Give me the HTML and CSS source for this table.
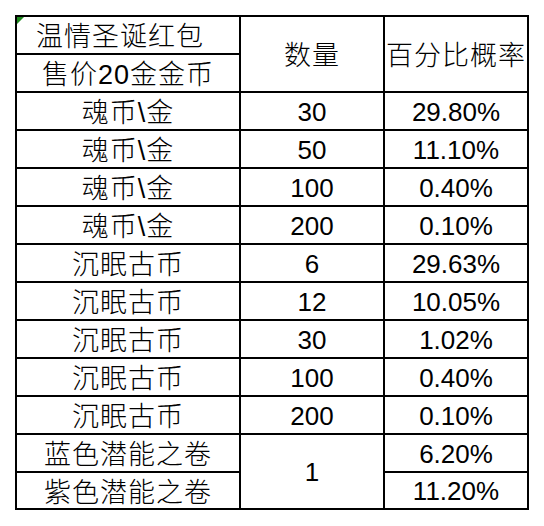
FILE: index.html
```html
<!DOCTYPE html>
<html lang="zh-CN">
<head>
<meta charset="utf-8">
<title>温情圣诞红包</title>
<link rel="stylesheet" href="styles.css">
</head>
<body>
<table class="rates">
  <colgroup>
    <col class="c-name">
    <col class="c-qty">
    <col class="c-pct">
  </colgroup>
  <tbody>
    <tr>
      <td class="title"><span class="flag"></span><span class="shift">温情圣诞红包</span></td>
      <td rowspan="2">数量</td>
      <td rowspan="2">百分比概率</td>
    </tr>
    <tr><td>售价20金金币</td></tr>
    <tr><td>魂币\金</td><td class="num">30</td><td class="num">29.80%</td></tr>
    <tr><td>魂币\金</td><td class="num">50</td><td class="num">11.10%</td></tr>
    <tr><td>魂币\金</td><td class="num">100</td><td class="num">0.40%</td></tr>
    <tr><td>魂币\金</td><td class="num">200</td><td class="num">0.10%</td></tr>
    <tr><td>沉眠古币</td><td class="num">6</td><td class="num">29.63%</td></tr>
    <tr><td>沉眠古币</td><td class="num">12</td><td class="num">10.05%</td></tr>
    <tr><td>沉眠古币</td><td class="num">30</td><td class="num">1.02%</td></tr>
    <tr><td>沉眠古币</td><td class="num">100</td><td class="num">0.40%</td></tr>
    <tr><td>沉眠古币</td><td class="num">200</td><td class="num">0.10%</td></tr>
    <tr><td>蓝色潜能之卷</td><td rowspan="2" class="num">1</td><td class="num">6.20%</td></tr>
    <tr class="last"><td>紫色潜能之卷</td><td class="num">11.20%</td></tr>
  </tbody>
</table>
</body>
</html>
```
FILE: styles.css
```css
html, body {
  margin: 0;
  padding: 0;
  background: #ffffff;
}

body {
  font-family: "Liberation Sans", "Noto Sans CJK SC", sans-serif;
  color: #000000;
}

.rates {
  margin: 15px 0 0 15px;
  border-collapse: collapse;
  table-layout: fixed;
  width: 514px;
}

.c-name { width: 224px; }
.c-qty { width: 144px; }
.c-pct { width: 144px; }

.rates tr { height: 38px; }
.rates tr.last { height: 37px; }

.rates td {
  border: 2px solid #000000;
  padding: 4px 0 0 0;
  text-align: center;
  vertical-align: middle;
  font-size: 27px;
  font-weight: 300;
  letter-spacing: 1px;
  line-height: 30px;
  white-space: nowrap;
  overflow: visible;
}

.rates td.num {
  font-size: 26px;
  font-weight: 400;
  letter-spacing: 0;
  padding-top: 1px;
}

.rates td.title {
  position: relative;
}

.shift {
  display: inline-block;
  margin-right: 16px;
}

.flag {
  position: absolute;
  left: 0;
  top: 0;
  width: 0;
  height: 0;
  border-top: 7px solid #1e8a1e;
  border-right: 7px solid transparent;
}
```
